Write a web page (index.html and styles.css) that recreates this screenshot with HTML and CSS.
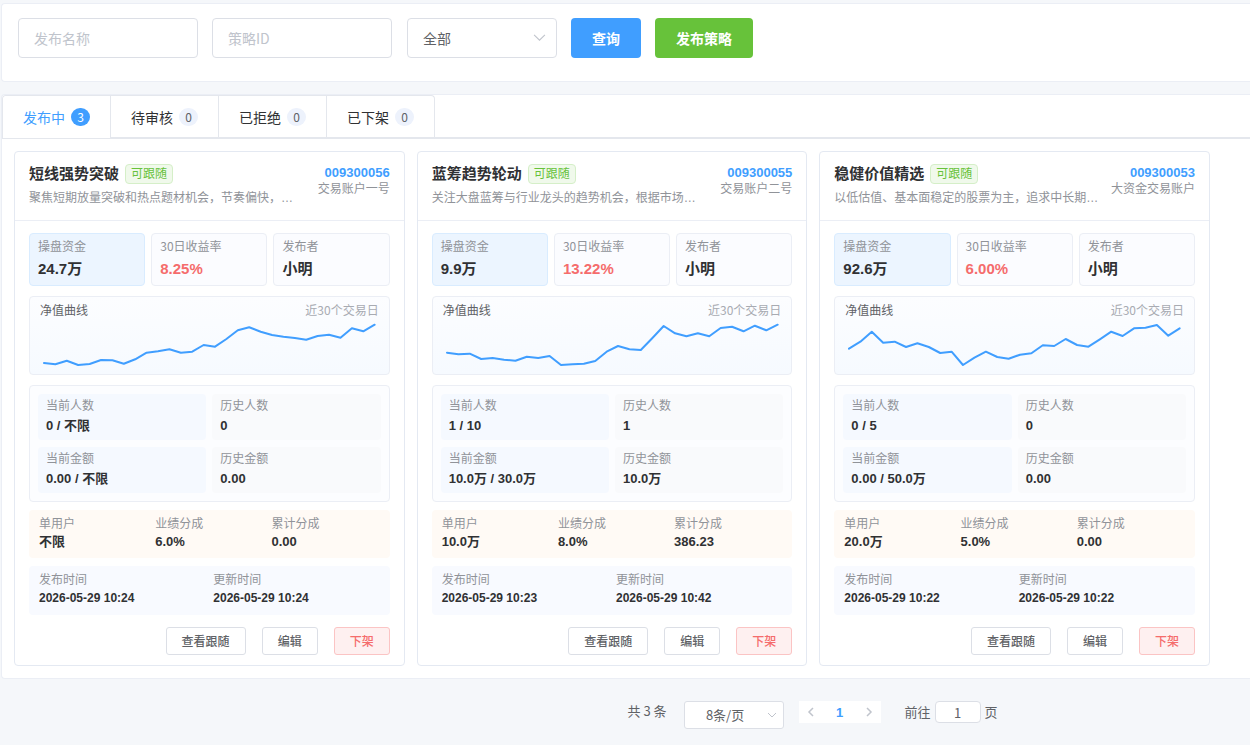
FILE: index.html
```
<!DOCTYPE html>
<html lang="zh-CN">
<head>
    <meta charset="UTF-8">
    <meta name="viewport" content="width=device-width, initial-scale=1.0">
    <title>策略发布</title>
    <link rel="stylesheet" href="styles.css">
</head>
<body>

    <!-- 查询条件 -->
    <form class="panel search-bar">
        <input class="field" type="text" placeholder="发布名称" aria-label="发布名称">
        <input class="field" type="text" placeholder="策略ID" aria-label="策略ID">
        <div class="select-wrap status-select">
            <select class="field" aria-label="状态">
                <option>全部</option>
            </select>
            <svg class="arrow" viewBox="0 0 12 12"><path d="M1 3.5 L6 8.5 L11 3.5"/></svg>
        </div>
        <button type="button" class="btn btn-primary">查询</button>
        <button type="button" class="btn btn-success">发布策略</button>
    </form>

    <main class="panel list-panel">
        <nav class="tabs">
            <div class="tabs-nav">
                <button class="tab active">发布中<span class="badge">3</span></button>
                <button class="tab">待审核<span class="badge">0</span></button>
                <button class="tab">已拒绝<span class="badge">0</span></button>
                <button class="tab">已下架<span class="badge">0</span></button>
            </div>
        </nav>

        <div class="card-grid">
            <!-- 短线强势突破 -->
            <article class="card">
                <header class="card-header">
                    <div class="card-info">
                        <div class="title-row">
                            <h2>短线强势突破</h2>
                            <span class="tag">可跟随</span>
                        </div>
                        <p class="desc">聚焦短期放量突破和热点题材机会，节奏偏快，…</p>
                    </div>
                    <div class="account">
                        <a href="#">009300056</a>
                        <span>交易账户一号</span>
                    </div>
                </header>
                <div class="card-body">
                    <div class="stats">
                        <div class="stat main"><span class="label">操盘资金</span><strong>24.7万</strong></div>
                        <div class="stat"><span class="label">30日收益率</span><strong class="up">8.25%</strong></div>
                        <div class="stat"><span class="label">发布者</span><strong>小明</strong></div>
                    </div>
                    <div class="chart">
                        <div class="chart-head"><span>净值曲线</span><span class="period">近30个交易日</span></div>
                        <svg viewBox="0 0 339 50" preserveAspectRatio="none">
                            <polyline points="4,43 15.4,44.3 26.8,40.7 38.2,45 49.7,44 61.1,40 72.5,40.3 83.9,43.7 95.3,39.3 106.7,32.7 118.1,31.3 129.6,29.3 141,32.7 152.4,31.7 163.8,25 175.2,26.7 186.6,19 198,10.3 209.4,7.3 220.9,11.7 232.3,15 243.7,16.7 255.1,18 266.5,19.7 277.9,16 289.3,14.7 300.8,17.7 312.2,8.3 323.6,11.3 335,4.7"/>
                        </svg>
                    </div>
                    <div class="metrics">
                        <div class="metric current"><span class="label">当前人数</span><strong>0 / 不限</strong></div>
                        <div class="metric"><span class="label">历史人数</span><strong>0</strong></div>
                        <div class="metric current"><span class="label">当前金额</span><strong>0.00 / 不限</strong></div>
                        <div class="metric"><span class="label">历史金额</span><strong>0.00</strong></div>
                    </div>
                    <div class="share">
                        <div><span class="label">单用户</span><strong>不限</strong></div>
                        <div><span class="label">业绩分成</span><strong>6.0%</strong></div>
                        <div><span class="label">累计分成</span><strong>0.00</strong></div>
                    </div>
                    <div class="times">
                        <div><span class="label">发布时间</span><strong>2026-05-29 10:24</strong></div>
                        <div><span class="label">更新时间</span><strong>2026-05-29 10:24</strong></div>
                    </div>
                    <div class="actions">
                        <button class="btn-mini">查看跟随</button>
                        <button class="btn-mini">编辑</button>
                        <button class="btn-mini danger">下架</button>
                    </div>
                </div>
            </article>

            <!-- 蓝筹趋势轮动 -->
            <article class="card">
                <header class="card-header">
                    <div class="card-info">
                        <div class="title-row">
                            <h2>蓝筹趋势轮动</h2>
                            <span class="tag">可跟随</span>
                        </div>
                        <p class="desc">关注大盘蓝筹与行业龙头的趋势机会，根据市场…</p>
                    </div>
                    <div class="account">
                        <a href="#">009300055</a>
                        <span>交易账户二号</span>
                    </div>
                </header>
                <div class="card-body">
                    <div class="stats">
                        <div class="stat main"><span class="label">操盘资金</span><strong>9.9万</strong></div>
                        <div class="stat"><span class="label">30日收益率</span><strong class="up">13.22%</strong></div>
                        <div class="stat"><span class="label">发布者</span><strong>小明</strong></div>
                    </div>
                    <div class="chart">
                        <div class="chart-head"><span>净值曲线</span><span class="period">近30个交易日</span></div>
                        <svg viewBox="0 0 339 50" preserveAspectRatio="none">
                            <polyline points="4,32.7 15.4,34.3 26.8,33.7 38.2,39 49.7,38 61.1,39.7 72.5,40.7 83.9,36.7 95.3,38 106.7,36 118.1,45 129.6,44.3 141,43.7 152.4,41 163.8,31.7 175.2,26 186.6,29.3 198,30 209.4,18.3 220.9,6 232.3,13.3 243.7,16.3 255.1,13.3 266.5,16.3 277.9,8 289.3,6.7 300.8,11.3 312.2,5.7 323.6,10.3 335,4.7"/>
                        </svg>
                    </div>
                    <div class="metrics">
                        <div class="metric current"><span class="label">当前人数</span><strong>1 / 10</strong></div>
                        <div class="metric"><span class="label">历史人数</span><strong>1</strong></div>
                        <div class="metric current"><span class="label">当前金额</span><strong>10.0万 / 30.0万</strong></div>
                        <div class="metric"><span class="label">历史金额</span><strong>10.0万</strong></div>
                    </div>
                    <div class="share">
                        <div><span class="label">单用户</span><strong>10.0万</strong></div>
                        <div><span class="label">业绩分成</span><strong>8.0%</strong></div>
                        <div><span class="label">累计分成</span><strong>386.23</strong></div>
                    </div>
                    <div class="times">
                        <div><span class="label">发布时间</span><strong>2026-05-29 10:23</strong></div>
                        <div><span class="label">更新时间</span><strong>2026-05-29 10:42</strong></div>
                    </div>
                    <div class="actions">
                        <button class="btn-mini">查看跟随</button>
                        <button class="btn-mini">编辑</button>
                        <button class="btn-mini danger">下架</button>
                    </div>
                </div>
            </article>

            <!-- 稳健价值精选 -->
            <article class="card">
                <header class="card-header">
                    <div class="card-info">
                        <div class="title-row">
                            <h2>稳健价值精选</h2>
                            <span class="tag">可跟随</span>
                        </div>
                        <p class="desc">以低估值、基本面稳定的股票为主，追求中长期…</p>
                    </div>
                    <div class="account">
                        <a href="#">009300053</a>
                        <span>大资金交易账户</span>
                    </div>
                </header>
                <div class="card-body">
                    <div class="stats">
                        <div class="stat main"><span class="label">操盘资金</span><strong>92.6万</strong></div>
                        <div class="stat"><span class="label">30日收益率</span><strong class="up">6.00%</strong></div>
                        <div class="stat"><span class="label">发布者</span><strong>小明</strong></div>
                    </div>
                    <div class="chart">
                        <div class="chart-head"><span>净值曲线</span><span class="period">近30个交易日</span></div>
                        <svg viewBox="0 0 339 50" preserveAspectRatio="none">
                            <polyline points="4,28.7 15.4,21.7 26.8,11.7 38.2,22.7 49.7,21.7 61.1,27 72.5,23.3 83.9,27 95.3,33 106.7,31.7 118.1,45 129.6,37.7 141,31.7 152.4,37 163.8,38.7 175.2,34.7 186.6,33.3 198,25.3 209.4,26 220.9,19 232.3,25 243.7,26.7 255.1,19.3 266.5,11.7 277.9,16 289.3,8.3 300.8,7.7 312.2,5 323.6,15.7 335,8.3"/>
                        </svg>
                    </div>
                    <div class="metrics">
                        <div class="metric current"><span class="label">当前人数</span><strong>0 / 5</strong></div>
                        <div class="metric"><span class="label">历史人数</span><strong>0</strong></div>
                        <div class="metric current"><span class="label">当前金额</span><strong>0.00 / 50.0万</strong></div>
                        <div class="metric"><span class="label">历史金额</span><strong>0.00</strong></div>
                    </div>
                    <div class="share">
                        <div><span class="label">单用户</span><strong>20.0万</strong></div>
                        <div><span class="label">业绩分成</span><strong>5.0%</strong></div>
                        <div><span class="label">累计分成</span><strong>0.00</strong></div>
                    </div>
                    <div class="times">
                        <div><span class="label">发布时间</span><strong>2026-05-29 10:22</strong></div>
                        <div><span class="label">更新时间</span><strong>2026-05-29 10:22</strong></div>
                    </div>
                    <div class="actions">
                        <button class="btn-mini">查看跟随</button>
                        <button class="btn-mini">编辑</button>
                        <button class="btn-mini danger">下架</button>
                    </div>
                </div>
            </article>
        </div>
    </main>

    <!-- 分页 -->
    <footer class="pagination">
        <span class="total">共 3 条</span>
        <div class="select-wrap size-select">
            <select class="field" aria-label="每页条数">
                <option>8条/页</option>
            </select>
            <svg class="arrow" viewBox="0 0 12 12"><path d="M2 4 L6 8 L10 4"/></svg>
        </div>
        <div class="pager">
            <button aria-label="上一页"><svg viewBox="0 0 12 12"><path d="M8 2 L4 6 L8 10"/></svg></button>
            <button class="current-page">1</button>
            <button aria-label="下一页"><svg viewBox="0 0 12 12"><path d="M4 2 L8 6 L4 10"/></svg></button>
        </div>
        <label class="jump">前往<input type="text" value="1">页</label>
    </footer>

</body>
</html>
```
FILE: styles.css
```
* {
    box-sizing: border-box;
}

body {
    margin: 0;
    padding: 3px 0 16px 1px;
    background: #f5f7fa;
    color: #303133;
    font-family: "Noto Sans CJK SC", "Noto Sans", sans-serif;
    font-size: 12px;
    line-height: 18px;
}

button, input, select {
    margin: 0;
    font-family: inherit;
}

button {
    cursor: pointer;
}

h2, p {
    margin: 0;
}

/* 数值用 Liberation Sans，中文仍走 Noto */
strong, .account a, .desc, .current-page {
    font-family: "Liberation Sans", "Noto Sans CJK SC", sans-serif;
}

.panel {
    background: #fff;
    border: 1px solid #ebeef5;
    border-right: none;
    border-radius: 4px 0 0 4px;
}

/* 查询条件 */
.search-bar {
    display: flex;
    gap: 14px;
    padding: 14px 16px 23px;
    margin-bottom: 12px;
}

.field {
    width: 180px;
    height: 40px;
    padding: 0 15px;
    border: 1px solid #dcdfe6;
    border-radius: 4px;
    background: #fff;
    color: #606266;
    font-size: 14px;
    outline: none;
    appearance: none;
}

.field::placeholder {
    color: #c0c4cc;
}

.select-wrap {
    position: relative;
}

.select-wrap .field {
    width: 100%;
}

.status-select {
    width: 150px;
    margin-left: 1px;
}

.arrow {
    position: absolute;
    right: 11px;
    top: 13px;
    width: 13px;
    height: 13px;
    pointer-events: none;
}

.arrow path, .pager path {
    fill: none;
    stroke: #c0c4cc;
    stroke-width: 1;
}

.btn {
    height: 40px;
    padding: 0 21px;
    border: none;
    border-radius: 4px;
    color: #fff;
    font-size: 14px;
    font-weight: 700;
}

.btn-primary { background: #409eff; }
.btn-success { background: #67c23a; }

/* 标签页 */
.tabs {
    border-bottom: 1px solid #e4e7ed;
    box-shadow: inset 0 -1px #e4e7ed;
}

.tabs-nav {
    display: inline-flex;
    vertical-align: top;
    border: 1px solid #e4e7ed;
    border-bottom: none;
    border-radius: 4px 4px 0 0;
}

.tab {
    display: flex;
    align-items: center;
    gap: 6px;
    height: 42px;
    padding: 0 20px 1px;
    border: none;
    background: none;
    color: #303133;
    font-size: 14px;
    line-height: 20px;
}

.tab + .tab {
    border-left: 1px solid #e4e7ed;
}

.tab.active {
    background: #fff;
    color: #409eff;
    border-radius: 4px 0 0 0;
}

.badge {
    min-width: 19px;
    height: 18px;
    border-radius: 9px;
    background: #edf2fc;
    color: #606266;
    font-size: 12px;
    line-height: 18px;
    text-align: center;
}

.tab.active .badge {
    background: #409eff;
    color: #fff;
}

/* 策略卡片 */
.card-grid {
    display: grid;
    grid-template-columns: repeat(3, minmax(0, 1fr));
    gap: 12px;
    padding: 12px 40px 12px 12px;
}

.card {
    background: #fff;
    border: 1px solid #e4e9f2;
    border-radius: 4px;
}

.card-header {
    display: flex;
    justify-content: space-between;
    padding: 12px 14px 13px;
    border-bottom: 1px solid #ebeef5;
}

.title-row {
    display: flex;
    align-items: flex-start;
    gap: 6px;
}

.title-row h2 {
    font-size: 15px;
    line-height: 18px;
    font-weight: 700;
}

.tag {
    height: 20px;
    padding: 0 5px;
    border: 1px solid #d5efc8;
    border-radius: 4px;
    background: #f0f9eb;
    color: #67c23a;
    line-height: 16px;
}

.desc {
    margin-top: 5px;
    color: #909399;
    white-space: nowrap;
    overflow: hidden;
}

.account {
    display: flex;
    flex-direction: column;
    align-items: flex-end;
    flex-shrink: 0;
    color: #909399;
    line-height: 14px;
}

.account a {
    color: #409eff;
    font-size: 13px;
    font-weight: 700;
    line-height: 17px;
    text-decoration: none;
}

.card-body {
    padding: 12px 14px 10px;
}

.label {
    display: block;
    margin-bottom: 2px;
    color: #909399;
    line-height: 16px;
}

strong {
    display: block;
    font-size: 13px;
    font-weight: 700;
}

.stats {
    display: grid;
    grid-template-columns: repeat(3, 1fr);
    gap: 6px;
}

.stat {
    padding: 4px 8px 5px;
    border: 1px solid #ebeef5;
    border-radius: 4px;
    background: #fbfcff;
}

.stat.main {
    background: #ecf5ff;
    border-color: #d9ecff;
}

.stat strong {
    margin-top: 4px;
    font-size: 15px;
    line-height: 22px;
}

.stat .up {
    color: #f56c6c;
}

.chart {
    margin-top: 10px;
    padding: 5px 10px 4px;
    border: 1px solid #ebeef5;
    border-radius: 4px;
    background: linear-gradient(180deg, #fcfdff, #f6faff);
}

.chart-head {
    display: flex;
    justify-content: space-between;
    margin-bottom: 2px;
    color: #606266;
    line-height: 16px;
}

.chart-head .period {
    color: #a8abb2;
}

.chart svg {
    display: block;
    width: 100%;
    height: 50px;
}

.chart polyline {
    fill: none;
    stroke: #409eff;
    stroke-width: 2;
    stroke-linejoin: round;
    stroke-linecap: round;
}

.metrics {
    display: grid;
    grid-template-columns: repeat(2, 1fr);
    gap: 7px 6px;
    margin-top: 10px;
    padding: 8px;
    border: 1px solid #ebeef5;
    border-radius: 4px;
    background: #fcfdff;
}

.metric {
    padding: 3px 8px;
    border-radius: 4px;
    background: #f9fafc;
}

.metric.current {
    background: #f5f9ff;
}

.metric strong {
    line-height: 22px;
}

.share, .times {
    display: grid;
    gap: 8px;
    margin-top: 8px;
    padding: 5px 10px 7px;
    border-radius: 4px;
}

.share {
    grid-template-columns: repeat(3, 1fr);
    background: #fffaf5;
}

.times {
    grid-template-columns: repeat(2, 1fr);
    padding-bottom: 8px;
    background: #f8faff;
}

.times strong {
    font-size: 12px;
}

.actions {
    display: flex;
    justify-content: flex-end;
    gap: 16px;
    margin-top: 12px;
}

.btn-mini {
    height: 28px;
    padding: 0 15px 2px;
    border: 1px solid #dcdfe6;
    border-radius: 3px;
    background: #fff;
    color: #606266;
    font-size: 12px;
    font-weight: 500;
}

.btn-mini.danger {
    border-color: #fbc4c4;
    background: #fef0f0;
    color: #f56c6c;
}

/* 分页 */
.pagination {
    display: flex;
    align-items: flex-start;
    margin: 22px 0 0 calc(50% + 2px);
    color: #606266;
    font-size: 13px;
    line-height: 20px;
}

.size-select {
    width: 100px;
    margin: 0 15px 0 17px;
}

.size-select .field {
    height: 28px;
    padding: 0 25px 2px 8px;
    border-radius: 3px;
    font-size: 13px;
    text-align: center;
    text-align-last: center;
}

.size-select .arrow {
    right: 6px;
    top: 8px;
    width: 12px;
    height: 12px;
}

.pager {
    display: flex;
    background: #fff;
}

.pager button {
    display: flex;
    align-items: center;
    justify-content: center;
    width: 24px;
    height: 22px;
    padding: 0;
    border: none;
    background: none;
}

.pager svg {
    width: 12px;
    height: 12px;
}

.pager path {
    stroke-width: 1.5;
}

.pager .current-page {
    width: 34px;
    color: #409eff;
    font-size: 13px;
    font-weight: 700;
}

.jump {
    display: flex;
    margin-left: 24px;
    line-height: 22px;
}

.jump input {
    width: 46px;
    height: 22px;
    margin: 0 4px;
    padding: 0;
    border: 1px solid #dcdfe6;
    border-radius: 4px;
    background: #fff;
    color: #606266;
    font-size: 13px;
    text-align: center;
    outline: none;
}
```
